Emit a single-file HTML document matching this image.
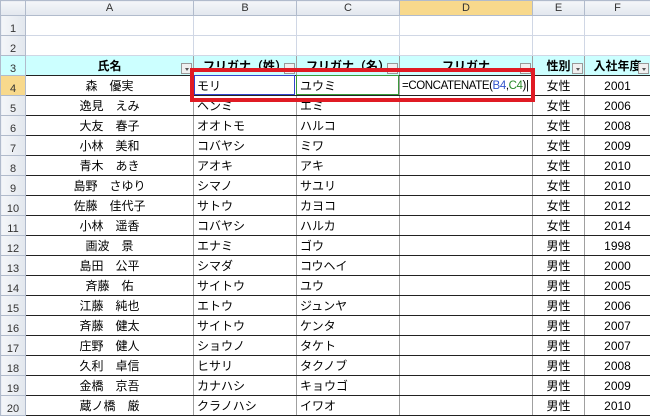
<!DOCTYPE html>
<html><head><meta charset="utf-8"><style>
body{margin:0;width:650px;height:417px;overflow:hidden;background:#fff;font-family:"Liberation Sans","Noto Sans CJK JP",sans-serif;font-size:12px;color:#000;position:relative}
table{border-collapse:collapse;table-layout:fixed;position:absolute;left:0;top:0;width:650px}
td{padding:0;height:19px;overflow:hidden;white-space:nowrap;border:1px solid #d0d7e5;position:relative}
.h td{height:14px;background:linear-gradient(#f4f6f9,#e2e7ee);color:#333;text-align:center;border-color:#b1bbcc;font-size:11px}
td.rn{background:linear-gradient(90deg,#f4f6f9,#e2e7ee);color:#333;text-align:center;border-color:#b1bbcc;font-size:11px;vertical-align:bottom}
td.rn.sel{background:#f8d98c}
.h td.sel{background:#f8d98c}
.t td{border-left:1px solid #a0a0a0;border-right:1px solid #a0a0a0;border-top:1px solid #222;border-bottom:1px solid #222}
.t td.rn{border-color:#b1bbcc}
.hd td{background:#ccffff;font-weight:bold;text-align:center}
.hd td.rn{font-weight:normal}
.c{text-align:center}
.l{padding-left:3px}
.dd{position:absolute;right:1px;bottom:1px;width:11px;height:11px;border:1px solid #999;background:#f0f0f0;box-sizing:border-box}
.dd:after{content:"";position:absolute;left:3px;top:4px;border-left:2px solid transparent;border-right:2px solid transparent;border-top:3px solid #555}
.e td:not(.rn){border-color:#d0d7e5;border-top-color:#d0d7e5}
.f{padding-left:2px;font-size:11.5px;letter-spacing:-0.4px;overflow:visible}
</style></head><body>
<table>
<colgroup><col style="width:25px"><col style="width:168px"><col style="width:103px"><col style="width:103px"><col style="width:133px"><col style="width:52px"><col style="width:66px"></colgroup>
<tr class="h"><td></td><td>A</td><td>B</td><td>C</td><td class="sel">D</td><td>E</td><td>F</td></tr>
<tr class="e"><td class="rn">1</td><td></td><td></td><td></td><td></td><td></td><td></td></tr>
<tr class="e"><td class="rn">2</td><td></td><td></td><td></td><td></td><td></td><td></td></tr>
<tbody class="t">
<tr class="hd"><td class="rn">3</td><td>氏名<span class="dd"></span></td><td>フリガナ（姓）<span class="dd"></span></td><td>フリガナ（名）<span class="dd"></span></td><td>フリガナ<span class="dd"></span></td><td>性別<span class="dd"></span></td><td>入社年度<span class="dd"></span></td></tr>
<tr><td class="rn sel">4</td><td class="c">森　優実</td><td class="l">モリ</td><td class="l">ユウミ</td><td class="f">=CONCATENATE(<span style="color:#3355cc">B4</span>,<span style="color:#2a8a2a">C4</span>)|</td><td class="c">女性</td><td class="c">2001</td></tr>
<tr><td class="rn">5</td><td class="c">逸見　えみ</td><td class="l">ヘンミ</td><td class="l">エミ</td><td></td><td class="c">女性</td><td class="c">2006</td></tr>
<tr><td class="rn">6</td><td class="c">大友　春子</td><td class="l">オオトモ</td><td class="l">ハルコ</td><td></td><td class="c">女性</td><td class="c">2008</td></tr>
<tr><td class="rn">7</td><td class="c">小林　美和</td><td class="l">コバヤシ</td><td class="l">ミワ</td><td></td><td class="c">女性</td><td class="c">2009</td></tr>
<tr><td class="rn">8</td><td class="c">青木　あき</td><td class="l">アオキ</td><td class="l">アキ</td><td></td><td class="c">女性</td><td class="c">2010</td></tr>
<tr><td class="rn">9</td><td class="c">島野　さゆり</td><td class="l">シマノ</td><td class="l">サユリ</td><td></td><td class="c">女性</td><td class="c">2010</td></tr>
<tr><td class="rn">10</td><td class="c">佐藤　佳代子</td><td class="l">サトウ</td><td class="l">カヨコ</td><td></td><td class="c">女性</td><td class="c">2012</td></tr>
<tr><td class="rn">11</td><td class="c">小林　遥香</td><td class="l">コバヤシ</td><td class="l">ハルカ</td><td></td><td class="c">女性</td><td class="c">2014</td></tr>
<tr><td class="rn">12</td><td class="c">画波　景</td><td class="l">エナミ</td><td class="l">ゴウ</td><td></td><td class="c">男性</td><td class="c">1998</td></tr>
<tr><td class="rn">13</td><td class="c">島田　公平</td><td class="l">シマダ</td><td class="l">コウヘイ</td><td></td><td class="c">男性</td><td class="c">2000</td></tr>
<tr><td class="rn">14</td><td class="c">斉藤　佑</td><td class="l">サイトウ</td><td class="l">ユウ</td><td></td><td class="c">男性</td><td class="c">2005</td></tr>
<tr><td class="rn">15</td><td class="c">江藤　純也</td><td class="l">エトウ</td><td class="l">ジュンヤ</td><td></td><td class="c">男性</td><td class="c">2006</td></tr>
<tr><td class="rn">16</td><td class="c">斉藤　健太</td><td class="l">サイトウ</td><td class="l">ケンタ</td><td></td><td class="c">男性</td><td class="c">2007</td></tr>
<tr><td class="rn">17</td><td class="c">庄野　健人</td><td class="l">ショウノ</td><td class="l">タケト</td><td></td><td class="c">男性</td><td class="c">2007</td></tr>
<tr><td class="rn">18</td><td class="c">久利　卓信</td><td class="l">ヒサリ</td><td class="l">タクノブ</td><td></td><td class="c">男性</td><td class="c">2008</td></tr>
<tr><td class="rn">19</td><td class="c">金橋　京吾</td><td class="l">カナハシ</td><td class="l">キョウゴ</td><td></td><td class="c">男性</td><td class="c">2009</td></tr>
<tr><td class="rn">20</td><td class="c">蔵ノ橋　厳</td><td class="l">クラノハシ</td><td class="l">イワオ</td><td></td><td class="c">男性</td><td class="c">2010</td></tr>
</tbody></table>
<div style="position:absolute;left:194px;top:75px;width:101px;height:20px;border:1px solid #3344cc;box-sizing:border-box"></div>
<div style="position:absolute;left:296px;top:75px;width:103px;height:20px;border:1px solid #3a9a3a;box-sizing:border-box"></div>
<div style="position:absolute;left:190px;top:68px;width:345px;height:34px;border:4px solid #e01b24;box-sizing:border-box"></div>
</body></html>
